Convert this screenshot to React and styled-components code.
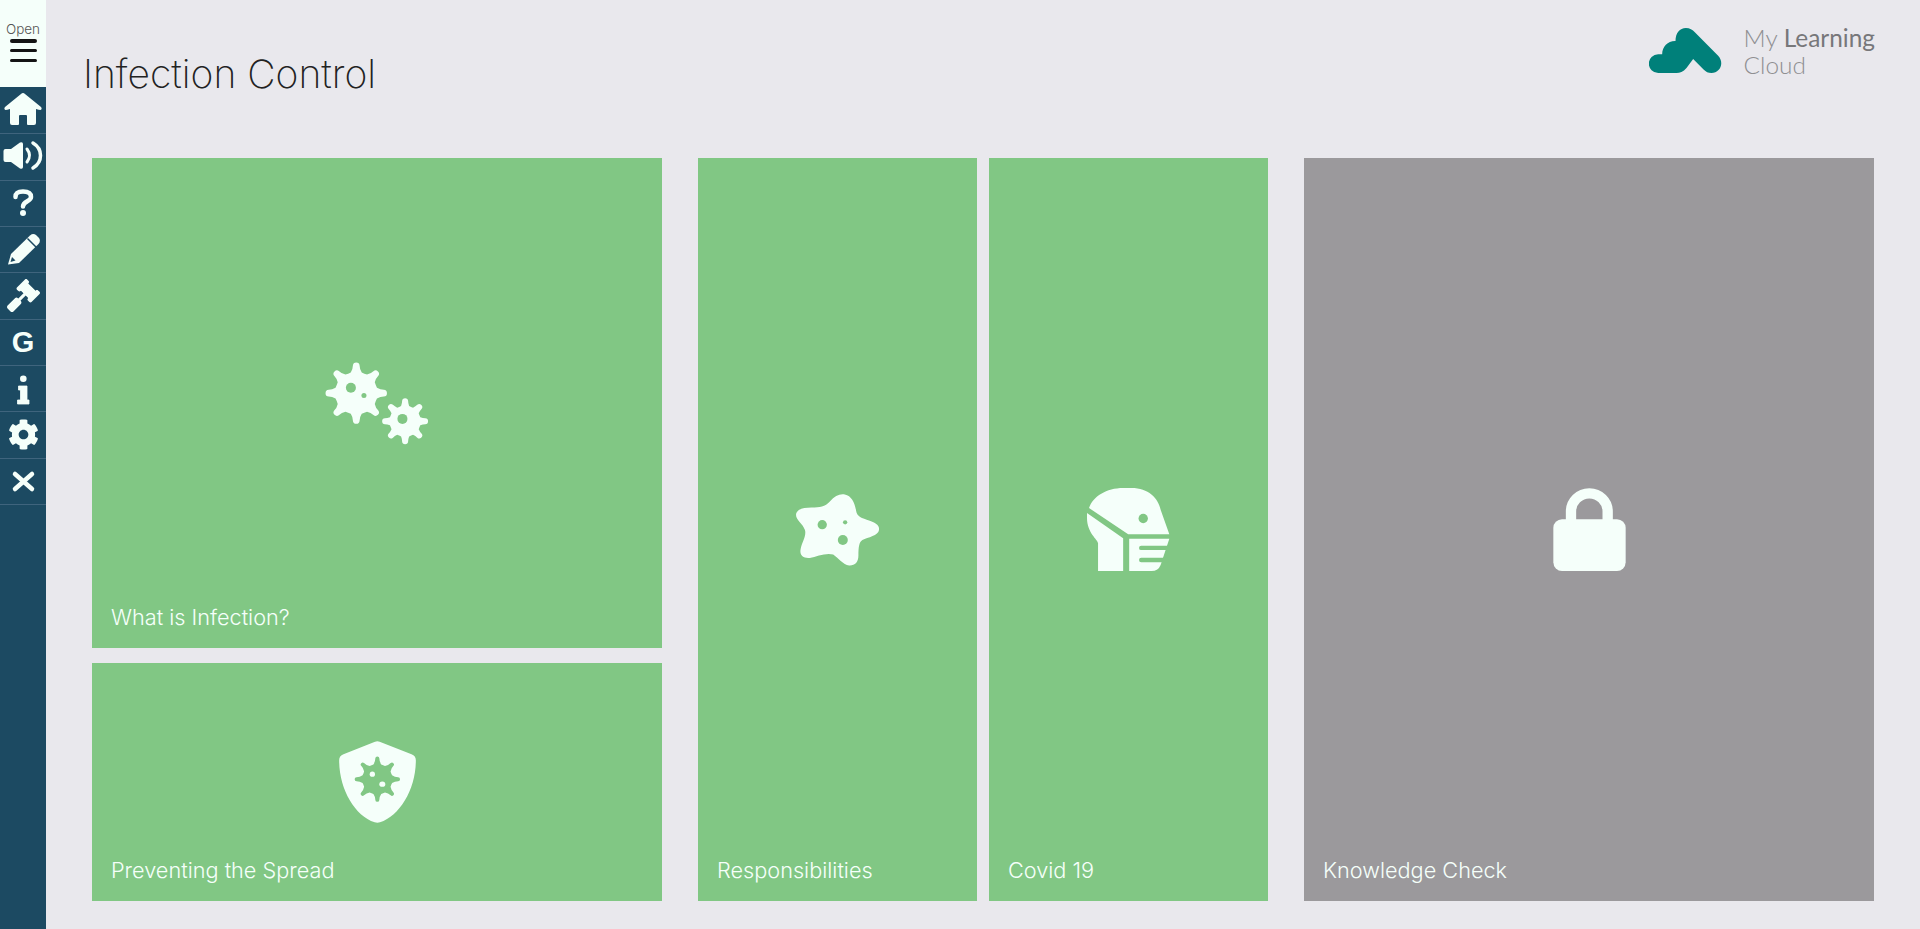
import React from 'react';
import styled, { createGlobalStyle } from 'styled-components';
import { FaGavel, FaCog } from 'react-icons/fa';

const GREEN = '#81c784';
const MINT = '#f5fffa';
const NAVY = '#1c4a62';

const Global = createGlobalStyle`
  html, body { margin: 0; padding: 0; background: #e9e8ed; }
  body { font-family: "Inter", "Liberation Sans", sans-serif; overflow: hidden; }
`;

const Page = styled.div`
  display: flex;
  height: 929px;
  width: 1920px;
`;

const Sidebar = styled.nav`
  width: 46px;
  flex: none;
  background: ${NAVY};
  display: flex;
  flex-direction: column;
`;

const MenuToggle = styled.div`
  height: 87px;
  background: ${MINT};
  display: flex;
  flex-direction: column;
  align-items: center;
  padding-top: 22px;
  box-sizing: border-box;
`;

const OpenLabel = styled.span`
  font-size: 13.5px;
  font-weight: 300;
  line-height: 15px;
  color: #555;
`;

const Bars = styled.div`
  width: 27px;
  margin-top: 2px;
  display: flex;
  flex-direction: column;
  gap: 6.3px;
`;

const Bar = styled.span`
  height: 3.5px;
  border-radius: 2px;
  background: #141414;
`;

const NavList = styled.div`
  padding-top: 1px;
  display: flex;
  flex-direction: column;
`;

const NavItem = styled.div`
  height: 46.33px;
  box-sizing: border-box;
  border-bottom: 1px solid #3f647d;
  display: flex;
  align-items: center;
  justify-content: center;
  color: ${MINT};
  font-size: ${p => p.$size || 33}px;
  font-family: "Liberation Sans", sans-serif;
  font-weight: 700;
`;

const NavGlyph = styled.svg`
  width: 46px;
  height: 46px;
  flex: none;
  display: block;
  fill: ${MINT};
`;

const Main = styled.main`
  flex: 1;
  display: flex;
  flex-direction: column;
  min-width: 0;
`;

const Header = styled.header`
  height: 158px;
  display: flex;
  justify-content: space-between;
  align-items: flex-start;
  padding: 0 45px 0 37px;
  box-sizing: border-box;
`;

const Title = styled.h1`
  margin: 50px 0 0;
  font-size: 39px;
  line-height: 48px;
  font-weight: 200;
  color: #222;
`;

const Logo = styled.div`
  display: flex;
  align-items: flex-start;
  gap: 22px;
  margin-top: 28px;
`;

const LogoText = styled.div`
  font-family: "Lato", sans-serif;
  font-weight: 300;
  font-size: 24.4px;
  line-height: 27px;
  color: #8f8f92;
  margin-top: -4px;
  b { font-weight: 400; color: #77777a; }
`;

const Board = styled.div`
  display: flex;
  gap: 36px;
  padding-left: 46px;
`;

const Stack = styled.div`
  width: 570px;
  display: flex;
  flex-direction: column;
  gap: 15px;
`;

const Pair = styled.div`
  display: flex;
  gap: 12px;
`;

const Tile = styled.div`
  display: grid;
  width: ${p => p.$w ? p.$w + 'px' : 'auto'};
  height: ${p => p.$h}px;
  background: ${p => p.$locked ? '#9b999c' : GREEN};
  color: ${MINT};
  > * { grid-area: 1 / 1; }
`;

const TileIcon = styled.svg`
  place-self: center;
  display: block;
`;

const TileLabel = styled.span`
  align-self: end;
  justify-self: start;
  margin: 0 0 17px 19px;
  font-size: 21.7px;
  line-height: 28px;
  font-weight: 300;
`;

function gearPath(cx, cy, rb, rt, n, w, rot = 0) {
  let d = '';
  const da = (2 * Math.PI) / n;
  const pt = (r, a) => `${(cx + r * Math.cos(a)).toFixed(2)} ${(cy + r * Math.sin(a)).toFixed(2)}`;
  for (let i = 0; i < n; i++) {
    const a = rot + i * da;
    const tipR = rt - w;
    const dTip = w / tipR;
    const base = da * 0.33;
    const mid = rb + (rt - rb) * 0.3;
    const stem = w / mid;
    d += (i === 0 ? 'M' : 'L') + pt(rb, a - base);
    d += 'Q' + pt(mid, a - stem) + ' ' + pt(tipR, a - dTip);
    d += `A${w} ${w} 0 0 1 ` + pt(tipR, a + dTip);
    d += 'Q' + pt(mid, a + stem) + ' ' + pt(rb, a + base);
    d += 'Q' + pt(rb * 0.98, a + da / 2) + ' ' + pt(rb, a + da - base);
  }
  return d + 'Z';
}

const Germs = () => (
  <TileIcon width="104" height="83" viewBox="48 63 310 248" fill={MINT}>
    <path d={gearPath(141, 156, 64, 93, 8, 10, -Math.PI / 2)} />
    <path d={gearPath(287, 240, 47, 70, 8, 9, -Math.PI / 2)} />
    <circle cx="125" cy="140" r="15" fill={GREEN} />
    <circle cx="164" cy="163" r="7.5" fill={GREEN} />
    <circle cx="279" cy="233" r="15" fill={GREEN} />
  </TileIcon>
);

const Shield = () => (
  <TileIcon width="77" height="82" viewBox="57 45 231 247">
    <path fill={MINT} d="M165 47Q172 44 179 47L275 85Q288 90 288 103C288 190 240 270 180 290Q172 293 164 290C104 270 57 190 57 103Q57 90 70 85Z" />
    <path fill={GREEN} d={gearPath(172, 160, 46, 69, 8, 6, -Math.PI / 2)} />
    <circle cx="157" cy="145" r="8" fill={MINT} />
    <ellipse cx="187" cy="175" rx="9" ry="8" fill={MINT} />
  </TileIcon>
);

const Blob = () => (
  <TileIcon width="83" height="72" viewBox="48 40 250 216">
    <path fill={MINT} d="M150 62C165 45 180 38 195 41C215 45 225 65 229 90C232 108 245 112 270 120C290 127 300 135 298 148C296 165 265 170 248 178C238 184 236 200 236 225C236 245 225 256 208 255C190 253 175 232 160 222C140 215 110 228 90 232C70 234 58 225 62 205C66 185 80 165 75 148C68 128 48 118 48 102C50 85 70 80 95 80C120 80 135 78 150 62Z" />
    <circle cx="127" cy="132" r="14" fill={GREEN} />
    <circle cx="196" cy="125" r="6.5" fill={GREEN} />
    <circle cx="189" cy="178" r="15" fill={GREEN} />
  </TileIcon>
);

const MaskHead = () => (
  <TileIcon width="83" height="83" viewBox="52 40 248 248" fill={MINT}>
    <path d="M58 100C70 65 110 40 160 40L185 40C235 40 265 70 272 105L298 178L175 178Z" />
    <circle cx="220" cy="131" r="14" fill={GREEN} />
    <path d="M52 115L160 190V288H85V205C85 195 52 175 52 130Z" />
    <path d="M178 192H298L272 270Q265 288 245 288H178Z" />
    <path d="M214 219H296M214 255H290" stroke={GREEN} strokeWidth="13" strokeLinecap="round" />
  </TileIcon>
);

const Lock = () => (
  <TileIcon width="73" height="83" viewBox="40 38 217 249">
    <path d="M93 145V108A55 54 0 0 1 203 108V145" fill="none" stroke={MINT} strokeWidth="31" />
    <rect x="40" y="132" width="217" height="155" rx="26" fill={MINT} />
  </TileIcon>
);

const CloudMark = () => (
  <svg width="73" height="45" viewBox="58 55 218 135" style={{ flex: 'none' }}>
    <path fill="#00807a" d="M85 190A28 28 0 0 1 85 134L97 134C97 110 115 93 137 94C137 70 150 55 168 55C180 55 188 60 195 68L265 138C285 160 270 190 245 190C235 190 228 186 222 180L190 148L170 175C160 187 150 190 140 190Z" />
  </svg>
);

const HomeIcon = () => (
  <NavGlyph viewBox="0 1 46 46">
    <path d="M23 6Q24 6 25 7L41 20Q42.5 22 40.5 23Q39 23 36 22V36Q36 38 34 38H28Q27 38 27 37V29Q27 28 26 28H20Q19 28 19 29V37Q19 38 18 38H12Q10 38 10 36V22Q7 23 5.5 23Q3.5 22 5 20L21 7Q22 6 23 6Z" />
  </NavGlyph>
);

const SoundIcon = () => (
  <NavGlyph viewBox="0 1 46 46">
    <path d="M3.5 18Q3.5 16 5.5 16H11L20 9.5Q23 8.5 23 11V34Q23 36.5 20 35.5L11 29H5.5Q3.5 29 3.5 27Z" />
    <path d="M27 16Q32 22.5 27 29" fill="none" stroke={MINT} strokeWidth="3" strokeLinecap="round" />
    <path d="M33 10C43 16 43 29 33 35" fill="none" stroke={MINT} strokeWidth="3.5" strokeLinecap="round" />
  </NavGlyph>
);

const QuestionIcon = () => (
  <NavGlyph viewBox="0 0 46 46">
    <path d="M15.5 17C15.5 12.5 18.5 11.5 23 11.5C28 11.5 31 13.5 31 17C31 21.5 23 21 23 26.5" fill="none" stroke={MINT} strokeWidth="4.5" strokeLinecap="round" />
    <circle cx="23" cy="33" r="3" />
  </NavGlyph>
);

const PencilIcon = () => (
  <NavGlyph viewBox="0 1 46 46">
    <path d="M8 38.5L11 28L30 9.5Q33 7 36 9L39 12Q41 15 38.5 18L19 37Z" />
    <path d="M27.5 12.5L36.5 21.5" stroke={NAVY} strokeWidth="1.5" />
    <path d="M12 31L15.5 34.5L10.5 36Z" fill={NAVY} />
  </NavGlyph>
);

const InfoIcon = () => (
  <NavGlyph viewBox="0 0 46 46">
    <circle cx="23.3" cy="12.7" r="3.3" />
    <path d="M18.5 20H27V34H29V38H17.5V34H20.5V24H18.5Z" stroke={MINT} strokeWidth="0.8" strokeLinejoin="round" />
  </NavGlyph>
);

const CloseIcon = () => (
  <NavGlyph viewBox="0 0 46 46">
    <path d="M15 16L32 31M32 16L15 31" stroke={MINT} strokeWidth="4.5" strokeLinecap="round" fill="none" />
  </NavGlyph>
);

const navItems = [
  { key: 'home', el: <HomeIcon /> },
  { key: 'audio', el: <SoundIcon /> },
  { key: 'help', el: <QuestionIcon /> },
  { key: 'edit', el: <PencilIcon /> },
  { key: 'legal', el: <FaGavel />, size: 33 },
  { key: 'glossary', el: 'G', size: 29 },
  { key: 'info', el: <InfoIcon /> },
  { key: 'settings', el: <FaCog />, size: 31 },
  { key: 'close', el: <CloseIcon /> },
];

export default function App() {
  return (
    <>
      <Global />
      <Page>
        <Sidebar>
          <MenuToggle>
            <OpenLabel>Open</OpenLabel>
            <Bars><Bar /><Bar /><Bar /></Bars>
          </MenuToggle>
          <NavList>
            {navItems.map(i => <NavItem key={i.key} $size={i.size}>{i.el}</NavItem>)}
          </NavList>
        </Sidebar>
        <Main>
          <Header>
            <Title>Infection Control</Title>
            <Logo>
              <CloudMark />
              <LogoText>My <b>Learning</b><br />Cloud</LogoText>
            </Logo>
          </Header>
          <Board>
            <Stack>
              <Tile $h={490}><Germs /><TileLabel>What is Infection?</TileLabel></Tile>
              <Tile $h={238}><Shield /><TileLabel>Preventing the Spread</TileLabel></Tile>
            </Stack>
            <Pair>
              <Tile $w={279} $h={743}><Blob /><TileLabel>Responsibilities</TileLabel></Tile>
              <Tile $w={279} $h={743}><MaskHead /><TileLabel>Covid 19</TileLabel></Tile>
            </Pair>
            <Tile $w={570} $h={743} $locked><Lock /><TileLabel>Knowledge Check</TileLabel></Tile>
          </Board>
        </Main>
      </Page>
    </>
  );
}
